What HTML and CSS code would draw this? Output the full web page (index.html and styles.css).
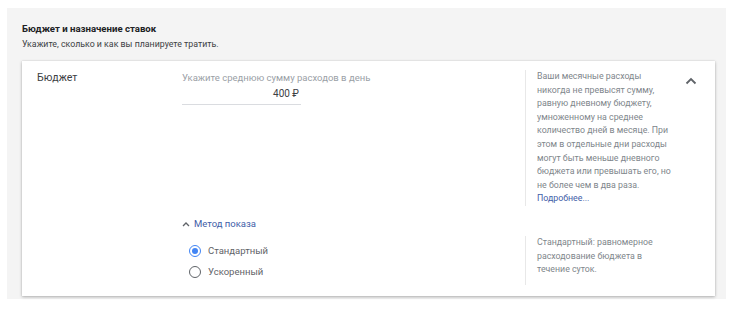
FILE: index.html
```html
<!DOCTYPE html>
<html lang="ru">
<head>
<meta charset="utf-8">
<link rel="stylesheet" href="styles.css">
</head>
<body>
<div class="panel">
  <div class="title">Бюджет и назначение ставок</div>
  <div class="subtitle">Укажите, сколько и как вы планируете тратить.</div>
  <div class="card">
    <div class="row">
      <div class="row-label">Бюджет</div>
      <div class="row-main">
        <div class="field">
          <div class="field-label">Укажите среднюю сумму расходов в день</div>
          <div class="field-value">400 ₽</div>
        </div>
      </div>
      <div class="row-side">
        Ваши месячные расходы<br>никогда не превысят сумму,<br>равную дневному бюджету,<br>умноженному на среднее<br>количество дней в месяце. При<br>этом в отдельные дни расходы<br>могут быть меньше дневного<br>бюджета или превышать его, но<br>не более чем в два раза.
        <a class="link" href="#">Подробнее...</a>
      </div>
      <div class="collapse">
        <svg width="12" height="8" viewBox="0 0 12 8"><path d="M1.5 6.5 L6 2 L10.5 6.5" fill="none" stroke="#5f6368" stroke-width="1.8"/></svg>
      </div>
    </div>
    <div class="toggle">
      <svg width="8" height="6" viewBox="0 0 8 6"><path d="M1 5 L4 2 L7 5" fill="none" stroke="#5f6368" stroke-width="1.3"/></svg>
      <span>Метод показа</span>
    </div>
    <div class="row row-method">
      <div class="row-label"></div>
      <div class="row-main">
        <div class="radios">
          <div class="radio checked"><span class="radio-ring"><span class="radio-dot"></span></span><span>Стандартный</span></div>
          <div class="radio"><span class="radio-ring"></span><span>Ускоренный</span></div>
        </div>
      </div>
      <div class="row-side">Стандартный: равномерное<br>расходование бюджета в<br>течение суток.</div>
    </div>
  </div>
</div>
</body>
</html>
```
FILE: styles.css
```css
html, body {
  margin: 0;
  padding: 0;
  background: #ffffff;
}
body {
  font-family: Roboto, "Noto Sans", Arial, sans-serif;
  color: #202124;
}
.panel {
  margin: 8px 10px 13px 7px;
  background: #f4f4f4;
  padding: 14px 11px 3px 15px;
}
.title {
  font-size: 9.6px;
  font-weight: 700;
  color: #202124;
  line-height: 13px;
}
.subtitle {
  font-size: 8.8px;
  color: #3c4043;
  line-height: 12px;
  margin-top: 3px;
}
.card {
  margin-top: 11px;
  background: #ffffff;
  box-shadow: 0 1px 3px rgba(0,0,0,0.28), 0 0 1px rgba(0,0,0,0.12);
  padding: 9px 0 11px 15px;
}
.row {
  display: flex;
  align-items: flex-start;
}
.row-label {
  width: 145px;
  flex: none;
  font-size: 10.6px;
  color: #3c4043;
  line-height: 14px;
  padding-top: 1px;
}
.row-main {
  width: 343px;
  flex: none;
}
.field {
  width: 119px;
  border-bottom: 1px solid #dadce0;
  padding-bottom: 3px;
}
.field-label {
  font-size: 9.5px;
  color: #9aa0a6;
  line-height: 13px;
  white-space: nowrap;
  padding-top: 1px;
}
.field-value {
  font-size: 10px;
  color: #3c4043;
  text-align: right;
  line-height: 14px;
  margin-top: 3px;
  padding-right: 2px;
}
.row-side {
  width: 140px;
  flex: none;
  border-left: 1px solid #e8e8e8;
  padding-left: 11px;
  font-size: 8.8px;
  line-height: 13.6px;
  color: #80868b;
  white-space: nowrap;
}
.link {
  display: block;
  color: #3f60a8;
  text-decoration: none;
}
.collapse {
  margin-left: 8px;
  padding-top: 0;
}
.toggle {
  display: flex;
  align-items: center;
  gap: 4px;
  margin: 11px 0 0 145px;
  font-size: 9.5px;
  line-height: 14px;
  color: #3f60a8;
}
.row-method {
  margin-top: 5px;
}
.row-method .row-side {
  padding-bottom: 8px;
}
.radios {
  display: flex;
  flex-direction: column;
  gap: 7px;
  padding-top: 8px;
  padding-left: 7px;
}
.radio {
  display: flex;
  align-items: center;
  gap: 7px;
  font-size: 9.5px;
  color: #5f6368;
  line-height: 14px;
}
.radio-ring {
  width: 10px;
  height: 10px;
  border: 1.6px solid #5f6368;
  border-radius: 50%;
  display: flex;
  align-items: center;
  justify-content: center;
  flex: none;
}
.radio.checked .radio-ring {
  border-color: #4285f4;
}
.radio-dot {
  width: 6px;
  height: 6px;
  border-radius: 50%;
  background: #4285f4;
}
```
